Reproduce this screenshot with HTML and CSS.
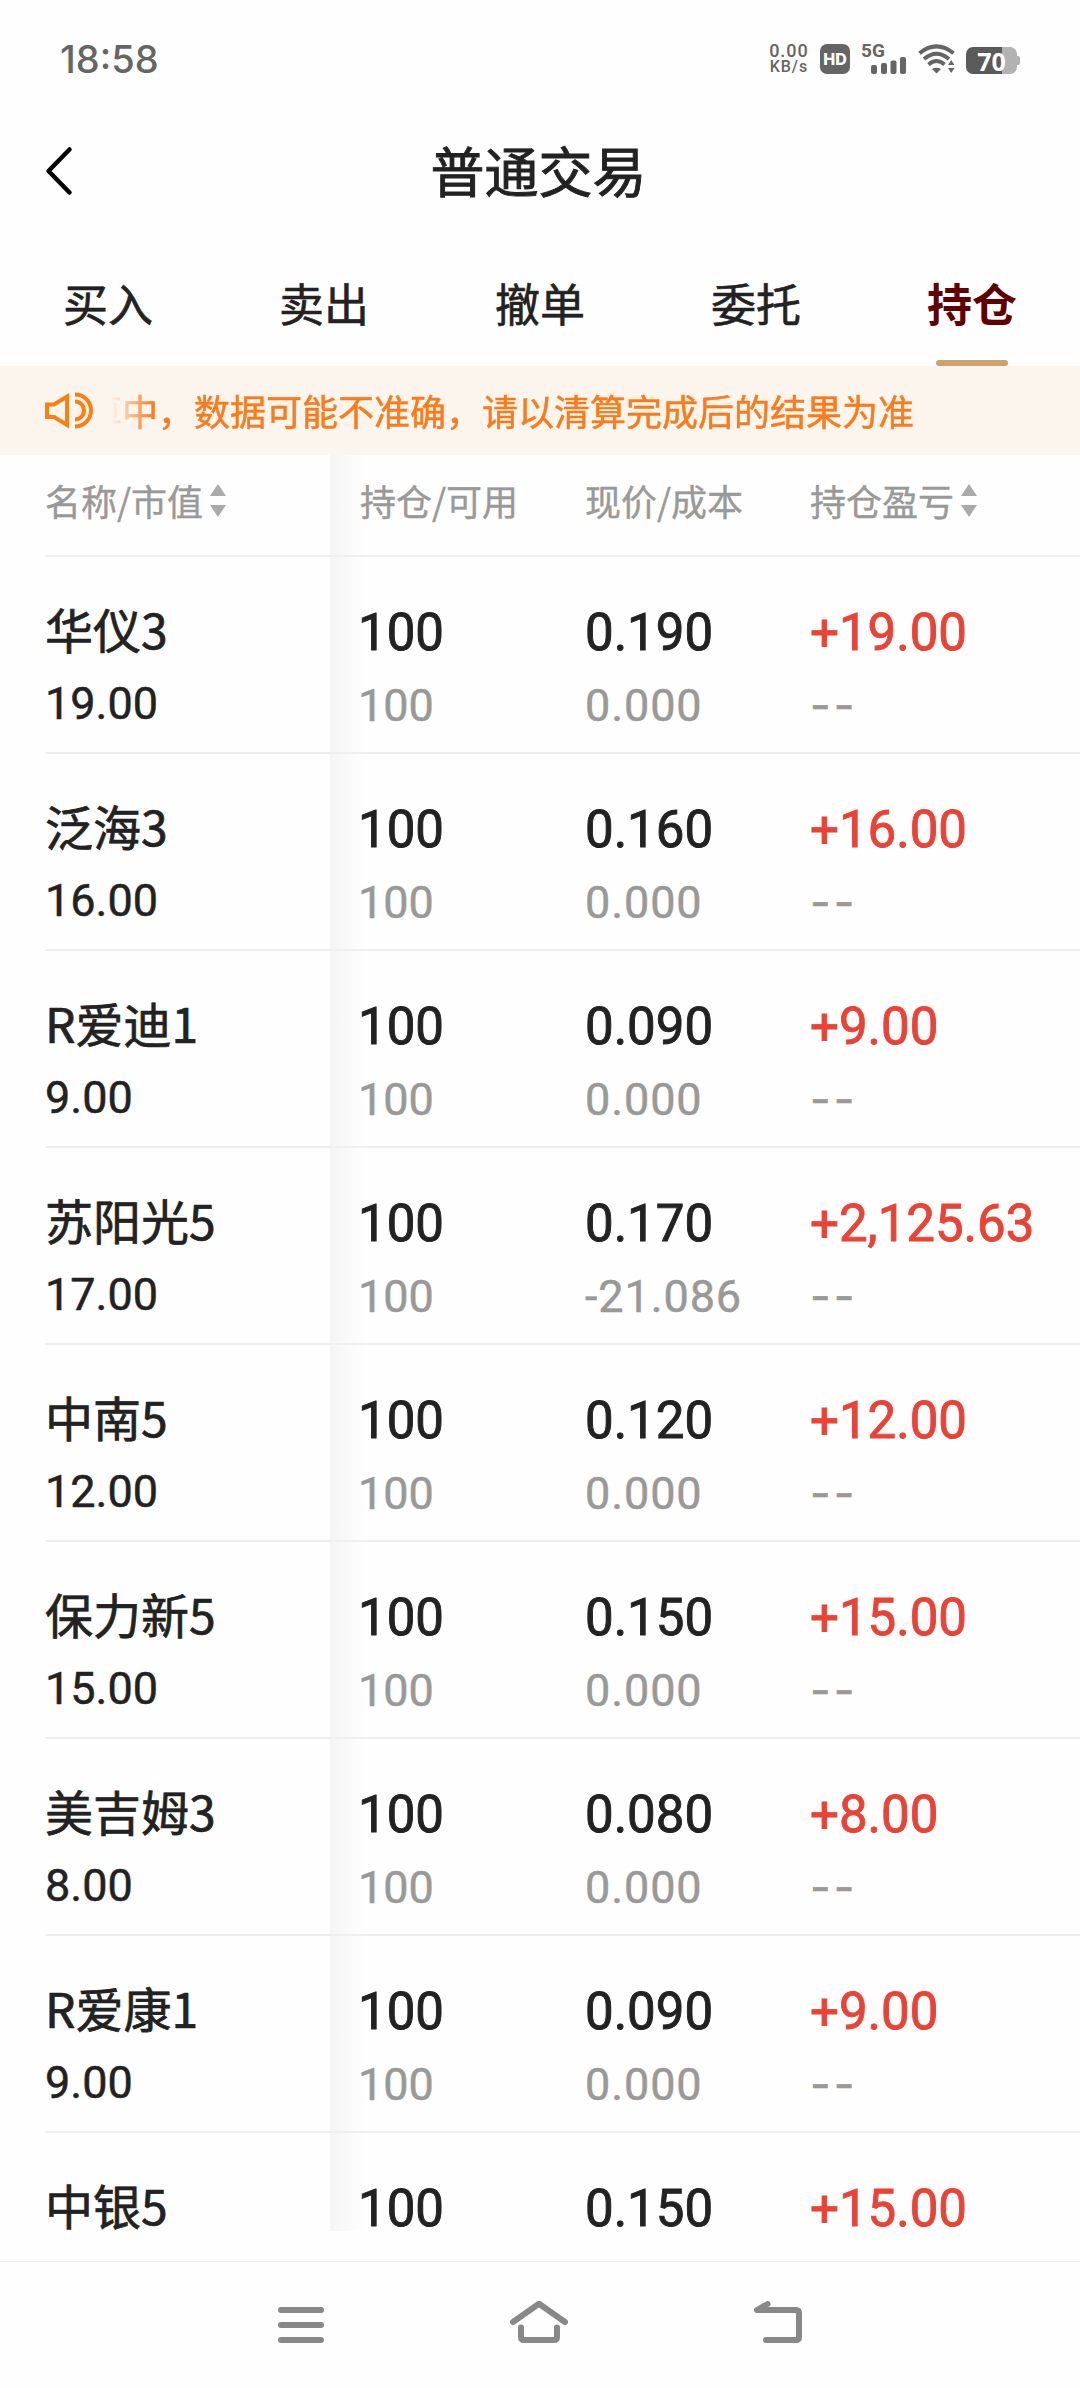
FILE: index.html
```html
<!DOCTYPE html>
<html lang="zh-CN">
<head>
  <meta charset="UTF-8">
  <title>普通交易</title>
  <link rel="stylesheet" href="styles.css">
</head>
<body>
  <div class="status">
    <span class="status-time">18:58</span>
    <div class="status-right">
      <div class="net-speed"><span>0.00</span><span class="unit">KB/s</span></div>
      <span class="hd">HD</span>
      <div class="signal">
        <span class="signal-type">5G</span>
        <svg class="signal-bars" width="36" height="17" viewBox="0 0 36 17" fill="#656565">
          <rect x="0" y="8" width="6" height="9" rx="2"/>
          <rect x="10" y="6" width="6" height="11" rx="2"/>
          <rect x="19.500" y="3.500" width="6" height="13.500" rx="2"/>
          <rect x="29" y="0" width="6" height="17" rx="2"/>
        </svg>
      </div>
      <svg class="wifi" width="38" height="30" viewBox="0 0 38 30" fill="none" stroke="#656565" stroke-width="4">
        <path d="M1.500 9.200 Q18.500 -4.500 35.500 9.200"/>
        <path d="M6 15 Q18.500 4.500 31 15"/>
        <path d="M10.500 20.500 Q18.500 13.500 26.500 20.500"/>
        <path d="M14 25 Q18.500 22.500 23 25 L18.500 29.500 Z" fill="#656565" stroke="none"/>
        <path d="M28 22 L33.200 13.500 L38 22 V24 L33.200 30 L28 24 Z" fill="#fefefe" stroke="none"/>
        <path d="M30 21 L33.200 16 L36.500 21 Z M30 24 L33.200 29 L36.500 24 Z" fill="#656565" stroke="none"/>
      </svg>
      <div class="battery"><span>70</span></div>
    </div>
  </div>

  <div class="header">
    <svg class="back" width="28" height="50" viewBox="0 0 28 50" fill="none" stroke="#000" stroke-width="4.500" stroke-linecap="round" stroke-linejoin="round">
      <path d="M24.500 3.500 L3.500 25 L24.500 46.500"/>
    </svg>
    <h1 class="title">普通交易</h1>
  </div>

  <div class="tabs">
    <div class="tab">买入</div>
    <div class="tab">卖出</div>
    <div class="tab">撤单</div>
    <div class="tab">委托</div>
    <div class="tab active">持仓</div>
  </div>

  <div class="notice">
    <svg class="horn" width="50" height="38" viewBox="0 0 50 38" fill="none" stroke="#ff7f0e" stroke-width="4">
      <path d="M3 12.500 H10 L23 4.500 V33 L10 25 H3 Z"/>
      <path d="M31 9.500 A9 9 0 0 1 31 27.500"/>
      <path d="M31 2.500 A16 16 0 0 1 31 34.500"/>
    </svg>
    <div class="notice-view"><span class="notice-text">清算中，数据可能不准确，请以清算完成后的结果为准</span></div>
  </div>

  <div class="table">
    <div class="row thead">
      <div class="th">名称/市值<i class="sort"></i></div>
      <div class="th">持仓/可用</div>
      <div class="th">现价/成本</div>
      <div class="th">持仓盈亏<i class="sort"></i></div>
    </div>
    <div class="list"></div>
  </div>

  <div class="navbar">
    <svg width="46" height="48" viewBox="0 0 46 48" fill="none" stroke="#888" stroke-width="6" stroke-linecap="round">
      <path d="M3 9 H43 M3 24 H43 M3 39 H43"/>
    </svg>
    <svg width="58" height="48" viewBox="0 0 58 48" fill="none" stroke="#888" stroke-width="6" stroke-linecap="round" stroke-linejoin="round">
      <path d="M3 21 L29 2.800 L55 21"/>
      <path d="M11 26.500 V36 Q11 39 14 39 H44 Q47 39 47 36 V26.500"/>
    </svg>
    <svg width="48" height="48" viewBox="0 0 48 48" fill="none" stroke="#888" stroke-width="6" stroke-linecap="round" stroke-linejoin="round">
      <path d="M13.500 3 L3 9 H42 Q45 9 45 12 V36 Q45 39 42 39 H12"/>
    </svg>
  </div>

  <script>
    // 名称, 市值, 持仓, 可用, 现价, 成本, 盈亏
    const data = [
      ['华仪3', '19.00', '100', '100', '0.190', '0.000', '+19.00'],
      ['泛海3', '16.00', '100', '100', '0.160', '0.000', '+16.00'],
      ['R爱迪1', '9.00', '100', '100', '0.090', '0.000', '+9.00'],
      ['苏阳光5', '17.00', '100', '100', '0.170', '-21.086', '+2,125.63'],
      ['中南5', '12.00', '100', '100', '0.120', '0.000', '+12.00'],
      ['保力新5', '15.00', '100', '100', '0.150', '0.000', '+15.00'],
      ['美吉姆3', '8.00', '100', '100', '0.080', '0.000', '+8.00'],
      ['R爱康1', '9.00', '100', '100', '0.090', '0.000', '+9.00'],
      ['中银5', '15.00', '100', '100', '0.150', '0.000', '+15.00']
    ];
    document.querySelector('.list').innerHTML = data.map((d) => `
      <div class="row">
        <div class="cell stock"><div class="name">${d[0]}</div><div class="sub">${d[1]}</div></div>
        <div class="cell amount"><div class="num">${d[2]}</div><div class="sub">${d[3]}</div></div>
        <div class="cell price"><div class="num">${d[4]}</div><div class="sub">${d[5]}</div></div>
        <div class="cell"><div class="num up">${d[6]}</div><div class="sub dash">--</div></div>
      </div>`).join('');
  </script>
</body>
</html>
```
FILE: styles.css
```css
* {
  margin: 0;
  padding: 0;
  box-sizing: border-box;
}
body {
  width: 1080px;
  height: 2388px;
  overflow: hidden;
  display: flex;
  flex-direction: column;
  background: #fefefe;
  color: #222222;
  font-family: "Noto Sans CJK SC", sans-serif;
}
svg {
  display: block;
}
.status {
  display: flex;
  justify-content: space-between;
  align-items: center;
  height: 118px;
  padding: 0 60px;
  color: #656565;
}
.status-time {
  font: 500 38px/40px Inter, sans-serif;
}
.status-right {
  display: flex;
  align-items: center;
}
.net-speed {
  display: flex;
  flex-direction: column;
  align-items: center;
  width: 40px;
  font: 500 18px/16px Roboto, sans-serif;
  letter-spacing: 1px;
}
.net-speed .unit {
  font-size: 16px;
}
.hd {
  width: 30px;
  height: 30px;
  margin-left: 11px;
  border-radius: 7px;
  background: #656565;
  color: #ffffff;
  font: 800 16px/30px Inter, sans-serif;
  text-align: center;
}
.signal {
  width: 46px;
  height: 30px;
  margin-left: 11px;
}
.signal-type {
  display: block;
  height: 13px;
  font: 700 19px/14px Roboto, sans-serif;
}
.signal-bars {
  margin-left: 10px;
}
.wifi {
  margin-left: 11px;
}
.battery {
  position: relative;
  width: 51px;
  height: 27px;
  margin: 2px 3px 0 10px;
  border-radius: 7px;
  background: linear-gradient(90deg, #5a5a5a 70%, #b2b2b2 70%);
  color: #ffffff;
  font: 700 25px/28px "Open Sans", sans-serif;
  text-align: center;
}
.battery::after {
  content: "";
  position: absolute;
  right: -3px;
  top: 9px;
  width: 3px;
  height: 9px;
  border-radius: 0 2px 2px 0;
  background: #b2b2b2;
}
.header {
  display: grid;
  grid-template-columns: 90px 1fr 90px;
  align-items: center;
  height: 108px;
}
.back {
  margin: 0 0 2px 45px;
}
.title {
  font-size: 54px;
  line-height: 80px;
  font-weight: 400;
  -webkit-text-stroke: .9px;
  text-align: center;
  padding-right: 3px;
  margin-bottom: 4px;
}
.tabs {
  display: flex;
  height: 140px;
}
.tab {
  display: flex;
  flex-direction: column;
  align-items: center;
  justify-content: flex-end;
  width: 216px;
  font-size: 45px;
  line-height: 66px;
  -webkit-text-stroke: .6px;
  padding-bottom: 30px;
}
.tab.active {
  padding-bottom: 0;
  color: #600000;
  font-weight: 700;
  -webkit-text-stroke: 0;
}
.tab.active::after {
  content: "";
  width: 72px;
  height: 6px;
  margin-top: 24px;
  border-radius: 3px;
  background: #cda36c;
}
.notice {
  display: flex;
  align-items: center;
  height: 89px;
  padding-left: 44px;
  background: #fcf5ee;
}
.notice-view {
  display: flex;
  justify-content: flex-end;
  width: 803px;
  margin: 0 0 2px 17px;
  overflow: hidden;
  -webkit-mask-image: linear-gradient(90deg, transparent, #000 42px);
  mask-image: linear-gradient(90deg, transparent, #000 42px);
}
.notice-text {
  color: #fb7a19;
  font-size: 36px;
  line-height: 54px;
  -webkit-text-stroke: .5px;
  white-space: nowrap;
}
.table {
  height: 1776px;
  overflow: hidden;
  background: linear-gradient(90deg, #f5f5f5, #fefefe) 330px 0 / 34px 100% no-repeat;
}
.row {
  display: grid;
  grid-template-columns: 315px 225px 225px 1fr;
  height: 197px;
  margin-left: 45px;
  border-bottom: 2px solid #efefef;
}
.thead {
  height: 102px;
}
.th {
  display: flex;
  align-items: center;
  height: 89px;
  color: #999999;
  font-size: 36px;
  -webkit-text-stroke: .4px;
}
.sort {
  display: flex;
  flex-direction: column;
  gap: 9px;
  margin: 1px 0 0 7px;
}
.sort::before,
.sort::after {
  content: "";
  border: 8.5px solid transparent;
}
.sort::before {
  border-top: 0;
  border-bottom: 12px solid #aaaaaa;
}
.sort::after {
  border-bottom: 0;
  border-top: 12px solid #aaaaaa;
}
.cell {
  padding-top: 41px;
}
.stock {
  padding-top: 36px;
}
.name {
  height: 72px;
  font-size: 48px;
  line-height: 70px;
  -webkit-text-stroke: .7px;
}
.num {
  height: 70px;
  font: 400 51px/70px Roboto, sans-serif;
  -webkit-text-stroke: .9px;
}
.sub {
  font: 400 45px/76px Roboto, sans-serif;
  -webkit-text-stroke: .5px;
  color: #999999;
}
.stock .sub {
  color: #222222;
  line-height: 77px;
}
.amount {
  margin-left: -2px;
}
.price .sub {
  letter-spacing: .9px;
}
.up {
  color: #ea4335;
}
.sub.dash {
  font-family: Inter, sans-serif;
  line-height: 73px;
  letter-spacing: 3px;
}
.navbar {
  display: flex;
  justify-content: center;
  align-items: center;
  gap: 186px;
  height: 127px;
  margin-top: 30px;
  border-top: 1px solid #f2f2f2;
}
```
